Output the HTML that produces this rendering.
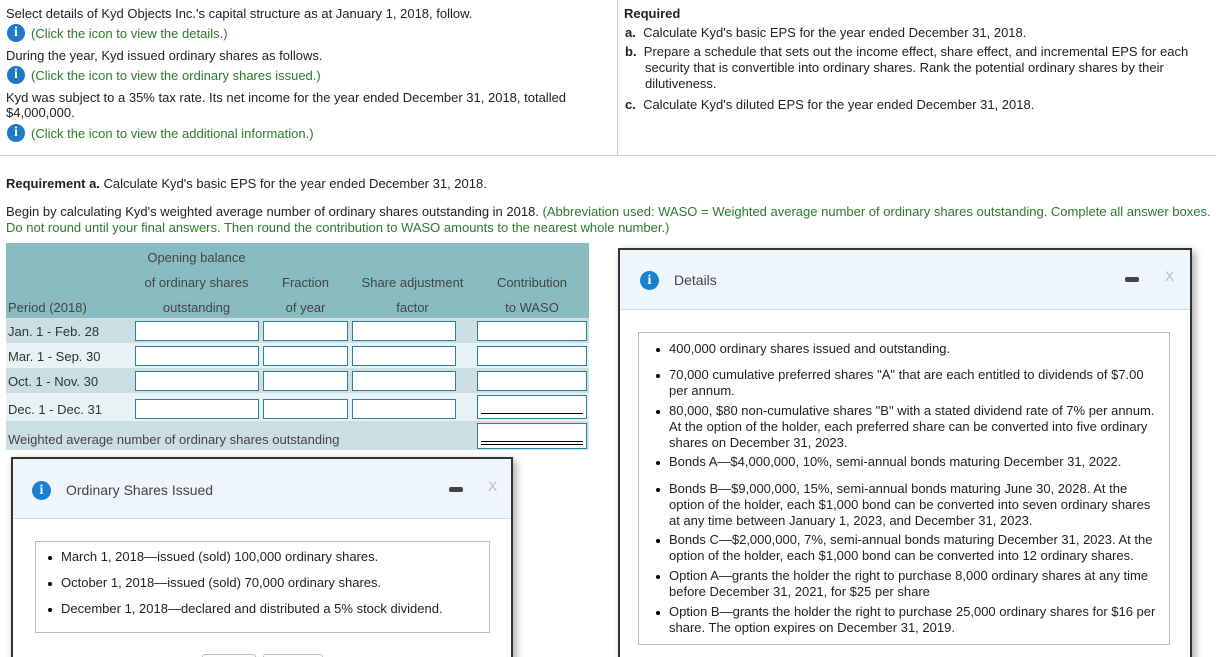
<!DOCTYPE html>
<html><head><meta charset="utf-8"><style>
*{margin:0;padding:0;box-sizing:border-box}
html,body{width:1216px;height:657px;overflow:hidden}
body{background:#fff;font-family:"Liberation Sans",Arial,sans-serif;font-size:13px;color:#222;position:relative}
.a{position:absolute;white-space:nowrap}
.g{color:#2b7a2b}
.ic{position:absolute;width:18px;height:18px;border-radius:50%;background:#1f78c8;color:#fff;font:bold 14px/18px "Liberation Serif",serif;text-align:center}
.row{position:absolute;left:6px;width:583px}
.in{position:absolute;height:20px;border:1px solid #2a7f9a;background:#fff}
.th{position:absolute;color:#444;text-align:center;white-space:nowrap}
.dlg{position:absolute;background:#fff;border:2px solid #333;box-shadow:3px 3px 8px rgba(0,0,0,.35)}
.hd{position:absolute;left:0;right:0;top:0;background:#eff5fd;border-bottom:1px solid #c7dff2}
.box{position:absolute;border:1px solid #bbb}
.li{position:absolute;left:30px;line-height:16px;white-space:normal}
.li:before{content:"";position:absolute;left:-13px;top:7px;width:4px;height:4px;border-radius:50%;background:#000}
</style></head><body>
<div class="a" style="left:6px;top:6px">Select details of Kyd Objects Inc.'s capital structure as at January 1, 2018, follow.</div>
<div class="ic" style="left:7px;top:24px">i</div><div class="a g" style="left:31px;top:26px">(Click the icon to view the details.)</div>
<div class="a" style="left:6px;top:48px">During the year, Kyd issued ordinary shares as follows.</div>
<div class="ic" style="left:7px;top:66px">i</div><div class="a g" style="left:31px;top:68px">(Click the icon to view the ordinary shares issued.)</div>
<div class="a" style="left:6px;top:90px;line-height:15px">Kyd was subject to a 35% tax rate. Its net income for the year ended December 31, 2018, totalled<br>$4,000,000.</div>
<div class="ic" style="left:7px;top:124px">i</div><div class="a g" style="left:31px;top:126px">(Click the icon to view the additional information.)</div>
<div style="position:absolute;left:617px;top:0;width:1px;height:155px;background:#ccc"></div>
<div style="position:absolute;left:0;top:155px;width:1216px;height:1px;background:#ccc"></div>
<div class="a" style="left:624px;top:6px;font-weight:bold">Required</div>
<div class="a" style="left:625px;top:25px"><b>a.</b>&nbsp; Calculate Kyd's basic EPS for the year ended December 31, 2018.</div>
<div class="a" style="left:625px;top:44px;line-height:16px"><b>b.</b>&nbsp; Prepare a schedule that sets out the income effect, share effect, and incremental EPS for each<br><span style="padding-left:20px">security that is convertible into ordinary shares. Rank the potential ordinary shares by their</span><br><span style="padding-left:20px">dilutiveness.</span></div>
<div class="a" style="left:625px;top:97px"><b>c.</b>&nbsp; Calculate Kyd's diluted EPS for the year ended December 31, 2018.</div>
<div class="a" style="left:6px;top:176px"><b>Requirement a.</b> Calculate Kyd's basic EPS for the year ended December 31, 2018.</div>
<div class="a" style="left:6px;top:204px;line-height:16px">Begin by calculating Kyd's weighted average number of ordinary shares outstanding in 2018. <span class="g">(Abbreviation used: WASO = Weighted average number of ordinary shares outstanding. Complete all answer boxes.<br>Do not round until your final answers. Then round the contribution to WASO amounts to the nearest whole number.)</span></div>

<div class="row" style="top:243px;height:75px;background:#88bcc1"></div>
<div class="row" style="top:318px;height:25px;background:#cbdfe2"></div>
<div class="row" style="top:343px;height:25px;background:#e8f1f3"></div>
<div class="row" style="top:368px;height:25px;background:#cbdfe2"></div>
<div class="row" style="top:393px;height:28px;background:#e8f1f3"></div>
<div class="row" style="top:421px;height:29px;background:#cbdfe2"></div>
<div class="th" style="left:135px;width:123px;top:250px">Opening balance</div>
<div class="th" style="left:135px;width:123px;top:275px">of ordinary shares</div>
<div class="th" style="left:135px;width:123px;top:300px">outstanding</div>
<div class="th" style="left:263px;width:85px;top:275px">Fraction</div>
<div class="th" style="left:263px;width:85px;top:300px">of year</div>
<div class="th" style="left:355px;width:115px;top:275px">Share adjustment</div>
<div class="th" style="left:355px;width:115px;top:300px">factor</div>
<div class="th" style="left:477px;width:110px;top:275px">Contribution</div>
<div class="th" style="left:477px;width:110px;top:300px">to WASO</div>
<div class="a" style="left:8px;top:300px;color:#444">Period (2018)</div>
<div class="a" style="left:8px;top:324px;color:#333">Jan. 1 - Feb. 28</div>
<div class="a" style="left:8px;top:349px;color:#333">Mar. 1 - Sep. 30</div>
<div class="a" style="left:8px;top:374px;color:#333">Oct. 1 - Nov. 30</div>
<div class="a" style="left:8px;top:402px;color:#333">Dec. 1 - Dec. 31</div>
<div class="a" style="left:8px;top:432px;color:#444">Weighted average number of ordinary shares outstanding</div>
<div class="in" style="left:135px;top:321px;width:124px"></div><div class="in" style="left:263px;top:321px;width:85px"></div><div class="in" style="left:352px;top:321px;width:104px"></div><div class="in" style="left:477px;top:321px;width:110px"></div>
<div class="in" style="left:135px;top:346px;width:124px"></div><div class="in" style="left:263px;top:346px;width:85px"></div><div class="in" style="left:352px;top:346px;width:104px"></div><div class="in" style="left:477px;top:346px;width:110px"></div>
<div class="in" style="left:135px;top:371px;width:124px"></div><div class="in" style="left:263px;top:371px;width:85px"></div><div class="in" style="left:352px;top:371px;width:104px"></div><div class="in" style="left:477px;top:371px;width:110px"></div>
<div class="in" style="left:135px;top:399px;width:124px"></div><div class="in" style="left:263px;top:399px;width:85px"></div><div class="in" style="left:352px;top:399px;width:104px"></div><div class="in" style="left:477px;top:395px;width:110px;height:24px"><div style="position:absolute;left:3px;right:3px;top:17px;height:1px;background:#000"></div></div>
<div class="in" style="left:477px;top:423px;width:110px;height:26px"><div style="position:absolute;left:3px;right:3px;top:17px;height:1px;background:#000"></div><div style="position:absolute;left:3px;right:3px;top:20px;height:1px;background:#000"></div></div>

<div class="dlg" style="left:11px;top:457px;width:502px;height:210px">
<div class="hd" style="height:60px"></div>
<div class="ic" style="left:19px;top:22px;width:19px;height:19px;line-height:19px;background:#1a7fd0">i</div>
<div class="a" style="left:53px;top:23px;font-size:14px;color:#444">Ordinary Shares Issued</div>
<div style="position:absolute;left:436px;top:28px;width:14px;height:5px;border-radius:2px;background:#444"></div>
<div class="a" style="left:475px;top:19px;font-size:14px;color:#bbb">X</div>
<div class="box" style="left:22px;top:82px;width:455px;height:92px">
<div class="li" style="left:25px;top:7px">March 1, 2018—issued (sold) 100,000 ordinary shares.</div>
<div class="li" style="left:25px;top:33px">October 1, 2018—issued (sold) 70,000 ordinary shares.</div>
<div class="li" style="left:25px;top:59px">December 1, 2018—declared and distributed a 5% stock dividend.</div>
</div>
<div style="position:absolute;left:189px;top:195px;width:54px;height:20px;border:1px solid #bbb;border-radius:3px"></div>
<div style="position:absolute;left:250px;top:195px;width:60px;height:20px;border:1px solid #bbb;border-radius:3px"></div>
</div>

<div class="dlg" style="left:618px;top:248px;width:574px;height:420px">
<div class="hd" style="height:60px"></div>
<div class="ic" style="left:20px;top:21px;width:19px;height:19px;line-height:19px;background:#1a7fd0">i</div>
<div class="a" style="left:54px;top:22px;font-size:14px;color:#444">Details</div>
<div style="position:absolute;left:505px;top:27px;width:14px;height:5px;border-radius:2px;background:#444"></div>
<div class="a" style="left:545px;top:18px;font-size:14px;color:#bbb">X</div>
<div class="box" style="left:18px;top:82px;width:532px;height:313px">
<div class="li" style="top:8px;width:490px">400,000 ordinary shares issued and outstanding.</div>
<div class="li" style="top:34px;width:490px">70,000 cumulative preferred shares "A" that are each entitled to dividends of $7.00 per annum.</div>
<div class="li" style="top:70px;width:492px">80,000, $80 non-cumulative shares "B" with a stated dividend rate of 7% per annum. At the option of the holder, each preferred share can be converted into five ordinary shares on December 31, 2023.</div>
<div class="li" style="top:121px;width:492px">Bonds A—$4,000,000, 10%, semi-annual bonds maturing December 31, 2022.</div>
<div class="li" style="top:148px;width:492px">Bonds B—$9,000,000, 15%, semi-annual bonds maturing June 30, 2028. At the option of the holder, each $1,000 bond can be converted into seven ordinary shares at any time between January 1, 2023, and December 31, 2023.</div>
<div class="li" style="top:199px;width:492px">Bonds C—$2,000,000, 7%, semi-annual bonds maturing December 31, 2023. At the option of the holder, each $1,000 bond can be converted into 12 ordinary shares.</div>
<div class="li" style="top:235px;width:492px">Option A—grants the holder the right to purchase 8,000 ordinary shares at any time before December 31, 2021, for $25 per share</div>
<div class="li" style="top:271px;width:492px">Option B—grants the holder the right to purchase 25,000 ordinary shares for $16 per share. The option expires on December 31, 2019.</div>
</div>
</div>
</body></html>
